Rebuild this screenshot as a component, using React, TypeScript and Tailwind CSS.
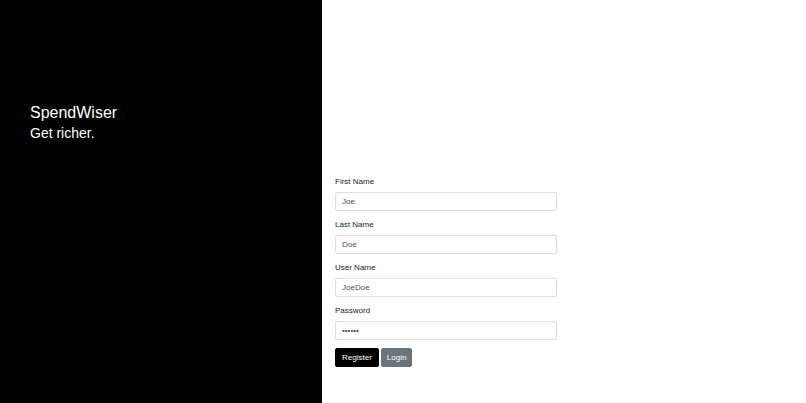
export default function App() {
  const fields = [
    { label: 'First Name', value: 'Joe', type: 'text' },
    { label: 'Last Name', value: 'Doe', type: 'text' },
    { label: 'User Name', value: 'JoeDoe', type: 'text' },
    { label: 'Password', value: '123456', type: 'password' },
  ]

  return (
    <div className="flex h-screen w-full font-['Liberation_Sans',Arial,sans-serif]">
      {/* side panel */}
      <div className="h-full w-[322px] shrink-0 bg-black pl-[30px] pt-[103px] text-white">
        <h2 className="text-[16px] leading-[19px]">SpendWiser</h2>
        <h3 className="mt-[3px] text-[14px] leading-[17px]">Get richer.</h3>
      </div>

      {/* register form */}
      <div className="flex-1 bg-white pl-[13px] pt-[176px]">
        <form className="w-[222px]" onSubmit={(e) => e.preventDefault()}>
          {fields.map((field) => (
            <div key={field.label} className="mb-[8px]">
              <label className="mb-[4px] block text-[8px] leading-[12px] text-[#212529]">
                {field.label}
              </label>
              <input
                type={field.type}
                defaultValue={field.value}
                className="block h-[19px] w-full rounded-[2px] border border-[#dadfe3] bg-white px-[6px] text-[8px] text-[#495057] outline-none"
              />
            </div>
          ))}
          <div className="flex gap-[2px]">
            <button
              type="submit"
              className="h-[19px] rounded-[2px] border border-black bg-black px-[6px] text-[8px] leading-[12px] text-white"
            >
              Register
            </button>
            <button
              type="button"
              className="h-[19px] rounded-[2px] border border-[#6c757d] bg-[#6c757d] px-[5px] text-[8px] leading-[12px] text-white"
            >
              Login
            </button>
          </div>
        </form>
      </div>
    </div>
  )
}
